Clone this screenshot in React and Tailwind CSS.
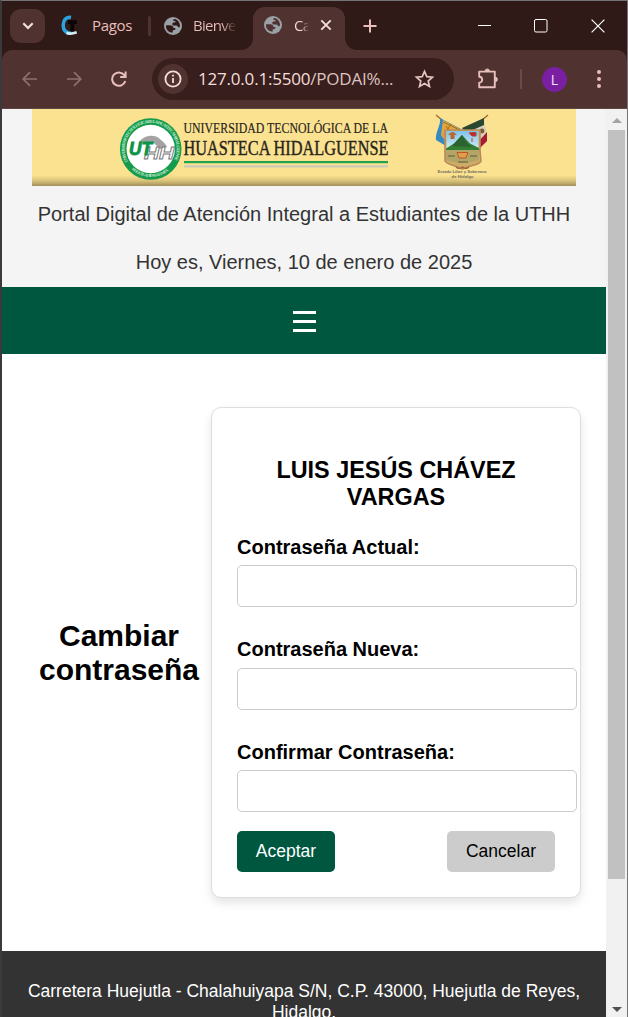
import React from "react";

const Globe = ({ className }) => (
  <svg viewBox="0 0 18 18" className={`h-[18px] w-[18px] shrink-0 ${className}`}>
    <circle cx="9" cy="9" r="9" fill="#9aa0a6" />
    <path d="M2 8.2 L6 8.3 C8.3 8.4 9.4 9.4 9.4 11 H10.6 C11.4 11 11.6 11.7 11.4 12.3 C11 13.3 9.8 13.2 8.7 13.3 V15.6 C5 15.7 1.5 12.6 2 8.2Z" className="fill-current" />
    <path d="M10 2.1 C13 2.3 16 5.1 16 9 C15.8 9.9 15.5 10.3 15 10.4 C13.9 10.4 13.5 8.8 12.3 8.6 H9.6 C8.1 8.4 7.9 6.2 9.1 5.5 H10.7 C11.6 5.2 11.8 4.2 11.2 3.9 H9.7 C9.1 3.6 9.2 2.5 10 2.1Z" className="fill-current" />
  </svg>
);

const TabStrip = () => (
  <div className="flex h-[49px] w-full shrink-0 items-center bg-[#301a17] pl-[8px] font-['Open_Sans',sans-serif] text-[15px] text-[#e8bfbb]">
    <div className="flex h-[34px] w-[35px] shrink-0 items-center justify-center rounded-[11px] bg-[#503331]">
      <svg viewBox="0 0 12 8" className="h-[8px] w-[12px]" fill="none" stroke="#f4dedb" strokeWidth="2.2"><path d="M1.3 1.3 L6 6 L10.7 1.3" /></svg>
    </div>
    <svg viewBox="0 0 17 21" className="ml-[16px] h-[21px] w-[17px] shrink-0">
      <path d="M10 2.5 C4.5 1.5 2.2 6 2.2 10.5 C2.2 15.5 5.5 18.6 10 18.3" fill="none" stroke="#2ba3da" strokeWidth="3.6" />
      <path d="M5.5 17.8 C8.5 19.2 12 18.6 15.7 17.2" fill="none" stroke="#d3edf7" strokeWidth="2.8" />
      <path d="M7 5.3 H16 V9 H13.2 V16 H9.4 V9 H7Z" fill="#080606" />
    </svg>
    <span className="ml-[14px] w-[42px] shrink-0 whitespace-nowrap tracking-[-0.35px]">Pagos</span>
    <div className="ml-[14px] h-[20px] w-[3px] shrink-0 rounded bg-[#503331]" />
    <Globe className="ml-[13px] text-[#301a17]" />
    <span className="ml-[11px] w-[44px] shrink-0 overflow-hidden whitespace-nowrap bg-linear-to-r from-[#e8bfbb] from-65% to-[#301a17] bg-clip-text tracking-[-0.7px] text-transparent">Bienve</span>
    <svg viewBox="0 0 12 12" className="ml-[4px] h-[12px] w-[12px] shrink-0 self-end"><path d="M0 12 A12 12 0 0 0 12 0 V12Z" fill="#503331" /></svg>
    <div className="flex h-[43px] w-[92px] shrink-0 items-center self-end rounded-t-[12px] bg-[#503331] pb-[7px] pl-[11px] text-[#f4dedb]">
      <Globe className="text-[#503331]" />
      <span className="ml-[12px] w-[15px] shrink-0 overflow-hidden whitespace-nowrap bg-linear-to-r from-[#f4dedb] from-50% to-[#503331] bg-clip-text tracking-[-0.7px] text-transparent">Ca</span>
      <svg viewBox="0 0 12 12" className="ml-[11px] h-[12px] w-[12px]" stroke="#f4dedb" strokeWidth="1.9"><path d="M1.3 1.3 L10.7 10.7 M10.7 1.3 L1.3 10.7" /></svg>
    </div>
    <svg viewBox="0 0 12 12" className="h-[12px] w-[12px] shrink-0 self-end"><path d="M12 12 A12 12 0 0 1 0 0 V12Z" fill="#503331" /></svg>
    <svg viewBox="0 0 14 14" className="ml-[6px] h-[14px] w-[14px] shrink-0" stroke="#e8bfbb" strokeWidth="2"><path d="M7 .5 V13.5 M.5 7 H13.5" /></svg>
    <div className="ml-auto flex items-center pr-[22px]">
      <svg viewBox="0 0 13 14" className="h-[14px] w-[13px]" stroke="#fff"><path d="M0 6.5 H13" /></svg>
      <svg viewBox="0 0 14 14" className="ml-[43px] h-[14px] w-[14px]" fill="none" stroke="#fff"><rect x=".5" y=".5" width="12.5" height="12.5" rx="1.5" /></svg>
      <svg viewBox="0 0 14 14" className="ml-[43px] h-[14px] w-[14px]" stroke="#fff" strokeWidth="1.2"><path d="M.6 .6 L13.4 13.4 M13.4 .6 L.6 13.4" /></svg>
    </div>
  </div>
);

const Toolbar = () => (
  <div className="w-full shrink-0 bg-[#301a17]">
    <div className="flex h-[59px] items-center rounded-t-[10px] border-b border-[#5f4543] bg-[#503331] font-['Open_Sans',sans-serif]">
      <svg viewBox="0 0 15 16" className="ml-[20px] h-[16px] w-[15px] shrink-0" fill="none" stroke="#8e706d" strokeWidth="1.7"><path d="M15 8 H1.4 M8 1.2 L1.2 8 L8 14.8" /></svg>
      <svg viewBox="0 0 15 16" className="ml-[30px] h-[16px] w-[15px] shrink-0" fill="none" stroke="#8e706d" strokeWidth="1.7"><path d="M0 8 H13.6 M7 1.2 L13.8 8 L7 14.8" /></svg>
      <svg viewBox="0 0 16 16" className="ml-[29px] h-[16px] w-[16px] shrink-0" fill="none" stroke="#e8bfbb" strokeWidth="2"><path d="M14.3 10 A6.7 6.7 0 1 1 13.3 4.2 L14.6 6 M14.6 .5 V6 H9.2" /></svg>
      <div className="ml-[25px] flex h-[42px] w-[302px] shrink-0 items-center rounded-full bg-[#381e1c] pl-[6px]">
        <div className="flex h-[30px] w-[30px] shrink-0 items-center justify-center rounded-full bg-[#503331]">
          <svg viewBox="0 0 18 18" className="h-[18px] w-[18px]" fill="none" stroke="#f4dedb" strokeWidth="1.8"><circle cx="9" cy="9" r="7.6" /><path d="M9 8 V13 M9 4.8 V6.6" /></svg>
        </div>
        <span className="ml-[10px] w-[196px] shrink-0 whitespace-nowrap text-[17px] tracking-[-0.2px] text-[#f4dedb]">127.0.0.1:5500<span className="text-[#dcc3c0]">/PODAI%...</span></span>
        <svg viewBox="0 0 20 20" className="ml-[20px] h-[20px] w-[20px] shrink-0" fill="none" stroke="#e0c4c1" strokeWidth="1.7"><path d="M10.5 2.4 L12.8 7.7 L18.5 8.2 L14.2 12 L15.5 17.6 L10.5 14.6 L5.5 17.6 L6.8 12 L2.5 8.2 L8.2 7.7Z" /></svg>
      </div>
      <svg viewBox="0 0 22 22" className="ml-[23px] h-[22px] w-[22px] shrink-0" fill="none" stroke="#e8bfbb" strokeWidth="1.9" strokeLinejoin="round">
        <path d="M3.2 3.6 H17.8 V19.2 H2.2 V14.7 A3 3 0 0 0 2.2 8.7 V3.6Z" />
        <path d="M8 3.2 A2.3 2.3 0 0 1 12.6 3.2Z M18.2 9.1 A2.3 2.3 0 0 1 18.2 13.7Z" fill="#e8bfbb" strokeWidth=".7" />
      </svg>
      <div className="ml-[21px] h-[20px] w-[2px] shrink-0 bg-[#6b4a48]" />
      <div className="ml-[20px] flex h-[25px] w-[25px] shrink-0 items-center justify-center rounded-full bg-[#7b1fa2] text-[14px] text-[#f5e6f8]">L</div>
      <svg viewBox="0 0 4 18" className="ml-[30px] h-[18px] w-[4px] shrink-0" fill="#e8bfbb"><circle cx="2" cy="2" r="2" /><circle cx="2" cy="9" r="2" /><circle cx="2" cy="16" r="2" /></svg>
    </div>
  </div>
);

const Banner = () => (
  <svg viewBox="0 0 544 77" className="mx-auto block h-[77px] w-[544px]">
    <defs>
      <linearGradient id="shade" x1="0" y1="0" x2="0" y2="1">
        <stop offset="0" stopColor="#fbe291" /><stop offset=".86" stopColor="#fbe291" /><stop offset=".93" stopColor="#dac47b" /><stop offset="1" stopColor="#a3905a" />
      </linearGradient>
      <linearGradient id="sky" x1="0" y1="0" x2="0" y2="1"><stop offset="0" stopColor="#7fc3ea" /><stop offset="1" stopColor="#d5edf5" /></linearGradient>
      <path id="ringTop" d="M96 52.5 A26 26 0 1 1 141.4 52.5" />
      <path id="ringBottom" d="M99.7 60.6 A28.6 28.6 0 0 0 137.7 60.6" />
    </defs>
    <rect width="544" height="77" fill="url(#shade)" />
    <circle cx="118.7" cy="40" r="30.8" fill="#169b4c" />
    <circle cx="118.7" cy="40" r="24.2" fill="#fff" />
    <g fontFamily="Liberation Serif, serif" fontWeight="700" fill="#cdebd8">
      <text fontSize="4.4" textLength="106"><textPath href="#ringTop">UNIVERSIDAD TECNOLOGICA DE LA HUASTECA HIDALGUENSE</textPath></text>
      <text fontSize="4" textLength="40"><textPath href="#ringBottom">HUEJUTLA, HIDALGO, MEX.</textPath></text>
    </g>
    <path d="M107 33 C113 25 124 25 129 31 C132 33 134 36 135 38 L128 40 L122 34Z" fill="#a3a3a3" />
    <g fontFamily="Liberation Sans, sans-serif" fontWeight="700" fontStyle="italic">
      <text x="112" y="49.5" fontSize="16" textLength="30" lengthAdjust="spacingAndGlyphs" fill="#fff" stroke="#777" strokeWidth=".8">HH</text>
      <text x="97" y="45.5" fontSize="18" textLength="23" lengthAdjust="spacingAndGlyphs" fill="#0c9447" stroke="#0c9447" strokeWidth=".9">UT</text>
    </g>
    <g fontFamily="Noto Serif, Liberation Serif, serif" fill="#29251b" stroke="#29251b" strokeWidth=".2">
      <text x="151.5" y="24" fontSize="14.8" textLength="204.5" lengthAdjust="spacingAndGlyphs" fontFamily="Liberation Serif, serif">UNIVERSIDAD TECNOLÓGICA DE LA</text>
      <text x="151.5" y="45.5" fontSize="20.5" textLength="205" lengthAdjust="spacingAndGlyphs" fontFamily="Liberation Serif, serif" strokeWidth=".4">HUASTECA HIDALGUENSE</text>
    </g>
    <rect x="152" y="52" width="204" height="2.2" fill="#20a34c" />
    <rect x="152" y="56.4" width="204" height="2" fill="#c7c7bd" />
    <path d="M404 6 L436 33 M456 6 L424 33" stroke="#a76630" strokeWidth="1.4" />
    <path d="M408 9 L431 21 L424 40 L414 37 L404 31 C403 23 409 17 408 9Z" fill="#358ac6" />
    <path d="M411 11 L430 21 L424 36 L414 33 L409 26Z" fill="#e2a63c" />
    <path d="M411 13 L430 22 M414 17 L423 29 M419 15 L412 26" stroke="#9a641c" strokeWidth=".9" />
    <path d="M452 9 L430 20 L437 40 L454 34 C457 24 452 17 452 9Z" fill="#d7d2ba" />
    <path d="M452 9 L430 19 L434 24 L452 16Z" fill="#28472e" />
    <path d="M455 23 L447 32 L447 40 L455 32Z" fill="#a71c31" />
    <circle cx="450" cy="22" r="2.4" fill="#765f35" />
    <path d="M413 21 H448 V42 L449 52 C448 56 438 56 430.5 60 C423 56 415 56 413 52Z" fill="#cfad67" stroke="#b9895a" strokeWidth="1.6" strokeLinejoin="round" />
    <rect x="414.5" y="22" width="32" height="19" fill="url(#sky)" />
    <path d="M414 39.5 L422 34.5 L430 26 L438 34.5 L447 39 V42 H414Z" fill="#357f35" />
    <path d="M420 37 L430 26 L435 34 L440 38Z" fill="#2a6230" />
    <path d="M414 41 H447 V51 C436 55 425 55 414 51Z" fill="#b3a468" />
    <path d="M416 47 H423 M438 47 H445 M426 53 H436" stroke="#5f5838" strokeWidth="1.2" />
    <path d="M416 26 Q420.5 20 425 26Z M418.5 26 H422.5 V30 H418.5Z" fill="#b66835" />
    <path d="M437 24 L440 27 H444 V23.5 H441 Z M440 29 V33" fill="#be2735" stroke="#b8402f" strokeWidth="1" />
    <path d="M425 43.5 H436 L434 49 H427Z" fill="#e0a04a" stroke="#b9582c" strokeWidth="1" />
    <path d="M424 58 Q427 61 430.5 58 Q434 61 437 58" fill="none" stroke="#a8683a" strokeWidth="1.5" />
    <g fontFamily="Liberation Sans, sans-serif" fontSize="4.3" fontWeight="700" fill="#736e5e" textAnchor="middle">
      <text x="430" y="64" textLength="49">Estado Libre y Soberano</text>
      <text x="430.5" y="69.3">de Hidalgo</text>
    </g>
  </svg>
);

const Field = ({ label, className, labelClass }) => (
  <label className={`block ${className}`}>
    <span className={`block text-[20px] leading-[23px] font-bold ${labelClass}`}>{label}</span>
    <input type="password" className="block h-[42px] w-[340px] rounded-[5px] border border-[#ccc] bg-white px-3 outline-none" />
  </label>
);

export default function App() {
  return (
    <div className="flex h-[1017px] w-[628px] flex-col overflow-hidden border-t border-r border-l-2 border-t-[#747474] border-r-[#747474] border-l-[#3b3a3b] bg-white font-['Liberation_Sans',Arial,sans-serif]">
      <TabStrip />
      <Toolbar />
      <div className="flex min-h-0 w-full flex-1">
        <div className="flex w-[604px] shrink-0 flex-col">
          <header className="h-[178px] shrink-0 bg-[#f4f4f4] text-center text-[20px] leading-[23px] text-[#333]">
            <Banner />
            <p className="mt-[17px] whitespace-nowrap">Portal Digital de Atención Integral a Estudiantes de la UTHH</p>
            <p className="mt-[25px] whitespace-nowrap">Hoy es, Viernes, 10 de enero de 2025</p>
          </header>
          <nav className="flex h-[67px] shrink-0 items-center justify-center bg-[#00573f] pt-[2px]">
            <svg viewBox="0 0 23 21" className="h-[21px] w-[23px]" fill="#fff"><path d="M0 0H23V3H0Z M0 9H23V12H0Z M0 18H23V21H0Z" /></svg>
          </nav>
          <main className="flex h-[597px] shrink-0 items-center pl-[25px] text-black">
            <h2 className="w-[184px] shrink-0 text-center text-[30px] leading-[34px] font-bold">Cambiar contraseña</h2>
            <form className="h-[491px] w-[370px] shrink-0 rounded-[10px] border border-[#ddd] bg-white px-[25px] pt-[49px] shadow-[0_5px_10px_rgba(0,0,0,0.1)]">
              <h3 className="text-center text-[23.4px] leading-[27px] font-bold">LUIS JESÚS CHÁVEZ VARGAS</h3>
              <Field label="Contraseña Actual:" className="mt-[25px]" labelClass="mb-[6px]" />
              <Field label="Contraseña Nueva:" className="mt-[31px]" labelClass="mb-[7px]" />
              <Field label="Confirmar Contraseña:" className="mt-[31px]" labelClass="mb-[6px]" />
              <div className="mt-[19px] flex justify-between text-[17.5px]">
                <button type="button" className="h-[41px] w-[98px] rounded-[5px] bg-[#00573f] text-white">Aceptar</button>
                <button type="button" className="h-[41px] w-[108px] rounded-[5px] bg-[#ccc] text-black">Cancelar</button>
              </div>
            </form>
          </main>
          <footer className="flex-1 overflow-hidden bg-[#333] px-[20px] pt-[30px] text-center text-[17.5px] leading-[21px] text-white">Carretera Huejutla - Chalahuiyapa S/N, C.P. 43000, Huejutla de Reyes, Hidalgo.</footer>
        </div>
        <div className="flex flex-1 flex-col items-center bg-[#f1f1f1]">
          <svg viewBox="0 0 10 5" className="mt-[9px] h-[5px] w-[10px]" fill="#a3a3a3"><path d="M0 5L5 0L10 5Z" /></svg>
          <div className="mt-[7px] h-[749px] w-[17px] bg-[#c1c1c1]" />
          <svg viewBox="0 0 10 5" className="mt-auto mb-[5px] h-[5px] w-[10px]" fill="#505050"><path d="M0 0L5 5L10 0Z" /></svg>
        </div>
      </div>
    </div>
  );
}
